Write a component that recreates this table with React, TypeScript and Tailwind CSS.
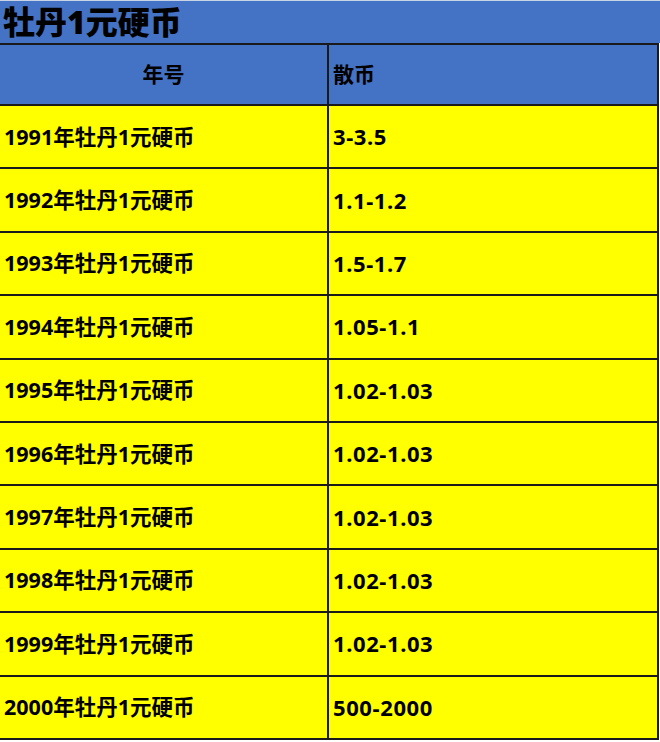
import React from 'react';

const rows = [
    { year: '1991', price: '3-3.5' },
    { year: '1992', price: '1.1-1.2' },
    { year: '1993', price: '1.5-1.7' },
    { year: '1994', price: '1.05-1.1' },
    { year: '1995', price: '1.02-1.03' },
    { year: '1996', price: '1.02-1.03' },
    { year: '1997', price: '1.02-1.03' },
    { year: '1998', price: '1.02-1.03' },
    { year: '1999', price: '1.02-1.03' },
    { year: '2000', price: '500-2000' },
];

const font = "font-['Noto_Sans','Noto_Sans_CJK_SC',sans-serif]";

const App = () => {
    return (
        <div className={`w-[660px] h-[742px] bg-white overflow-hidden ${font} text-black`}>
            {/* Title bar */}
            <div className="h-[43px] bg-[#4472C4] border-t border-[#c9d3e6] flex items-center pl-[3px]">
                <span className="text-[32px] font-black leading-none">牡丹1元硬币</span>
            </div>

            <div className="w-[659px] border-r-2 border-[#1a1a1a]">
                {/* Header row */}
                <div className="grid grid-cols-[329px_1fr] h-[63px] bg-[#4472C4] border-t-2 border-b-2 border-[#1a1a1a]">
                    <div className="flex items-center justify-center border-r-2 border-[#1a1a1a] text-[21px] font-bold">
                        年号
                    </div>
                    <div className="flex items-center pl-[4px] text-[21px] font-bold">散币</div>
                </div>

                {/* Data rows */}
                {rows.map((r) => (
                    <div
                        key={r.year}
                        className="grid grid-cols-[329px_1fr] h-[63.4px] bg-[#FFFF00] border-b-2 border-[#1a1a1a]"
                    >
                        <div className="flex items-center pl-[4px] border-r-2 border-[#1a1a1a] text-[21.5px] font-bold">
                            {r.year}年牡丹1元硬币
                        </div>
                        <div className="flex items-center pl-[4px] text-[22px] font-bold tracking-[0.6px]">
                            {r.price}
                        </div>
                    </div>
                ))}
            </div>
        </div>
    );
};

export default App;
